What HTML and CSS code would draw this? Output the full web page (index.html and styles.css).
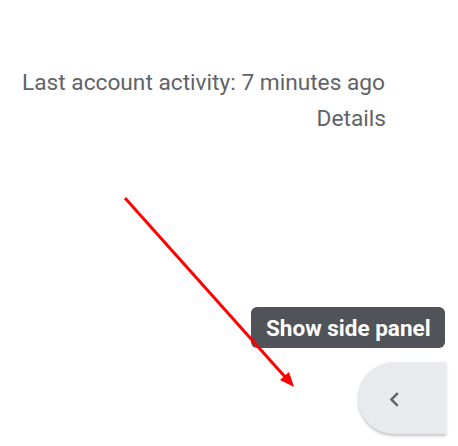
FILE: index.html
```html
<!DOCTYPE html>
<html>
<head>
<meta charset="utf-8">
<link rel="stylesheet" href="styles.css">
</head>
<body>
<div class="page">
  <div class="activity">
    <div class="line">Last account activity: 7 minutes ago</div>
    <div class="details">Details</div>
  </div>
  <div class="tooltip">Show side panel</div>
  <button class="side-toggle" aria-label="Show side panel">
    <svg width="29" height="29" viewBox="0 0 24 24"><path d="M15.41 7.41 14 6l-6 6 6 6 1.41-1.41L10.83 12z" fill="#5f6368"/></svg>
  </button>
  <svg class="annot" width="458" height="446" viewBox="0 0 458 446">
    <line x1="125" y1="198" x2="286" y2="378" stroke="#ff0000" stroke-width="3"/>
    <polygon points="294,387 280,380 289,372" fill="#ff0000"/>
  </svg>
</div>
</body>
</html>
```
FILE: styles.css
```css
html, body {
  margin: 0;
  padding: 0;
  background: #ffffff;
}
.page {
  position: relative;
  width: 458px;
  height: 446px;
  overflow: hidden;
  font-family: Roboto, "Liberation Sans", sans-serif;
}
.activity {
  display: flex;
  flex-direction: column;
  align-items: flex-end;
  width: 386px;
  padding-top: 68px;
  color: #5f6368;
  font-size: 22.7px;
  line-height: 30px;
}
.activity .line {
  align-self: flex-start;
  margin-left: 22px;
  white-space: nowrap;
}
.details {
  margin-top: 6px;
}
.tooltip {
  position: absolute;
  left: 251px;
  top: 307px;
  width: 194px;
  height: 41px;
  box-sizing: border-box;
  padding: 1px 0 0 15px;
  display: flex;
  align-items: center;
  background: #505357;
  color: #ffffff;
  border-radius: 6px;
  font-weight: 700;
  font-size: 22.5px;
  white-space: nowrap;
}
.side-toggle {
  position: absolute;
  left: 358px;
  top: 362px;
  width: 88px;
  height: 72px;
  border: none;
  padding: 2px 0 0 22px;
  background: #e8eaed;
  border-radius: 36px 0 0 36px;
  box-shadow: 0 2px 3px rgba(60, 64, 67, 0.3);
  display: flex;
  align-items: center;
}
.annot {
  position: absolute;
  left: 0;
  top: 0;
}
```
